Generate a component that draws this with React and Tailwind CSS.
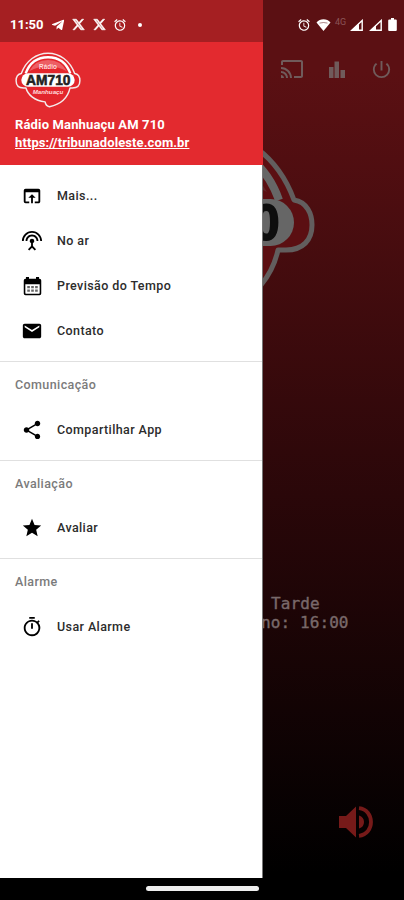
import { FaTelegramPlane } from 'react-icons/fa';
import { FaXTwitter } from 'react-icons/fa6';
import {
  MdAlarm,
  MdCast,
  MdEmail,
  MdOpenInBrowser,
  MdOutlineTimer,
  MdPowerSettingsNew,
  MdSettingsInputAntenna,
  MdShare,
  MdStar
} from 'react-icons/md';

function CalendarIcon({ className }) {
  return (
    <svg viewBox="0 0 24 24" fill="currentColor" className={className}>
      <path fillRule="evenodd" d="M4.500 1h3.500v2h8V1h3.500v2h.5a2 2 0 0 1 2 2v15a2 2 0 0 1-2 2H4a2 2 0 0 1-2-2V5a2 2 0 0 1 2-2h.5V1zM3.800 9.500V19.500q0 .7.7.7h15q.7 0 .7-.7V9.500z" />
      <path d="M6 11.500h3v2.500H6zM10.500 11.500h3v2.500h-3zM15 11.500h3v2.500h-3zM6 15.500h3v2.500H6zM10.500 15.500h3v2.500h-3zM15 15.500h3v2.500h-3z" opacity=".6" />
    </svg>
  );
}

function BarsIcon({ className }) {
  return (
    <svg viewBox="0 0 18 17" fill="currentColor" className={className}>
      <path d="M1 6h4.500v11H1zM6.500 0.500H11V17H6.500zM12.500 9H17v8h-4.500z" />
    </svg>
  );
}

function WifiIcon({ className }) {
  return (
    <svg viewBox="0 0 14 12" className={className}>
      <path d="M7 12 0 3.600C2 1.400 4.200.3 7 .3s5 1.100 7 3.300z" fill="#fff" />
      <path d="M3 4.100Q7 2.900 11 4.100" fill="none" stroke="#5a1013" strokeWidth=".5" />
    </svg>
  );
}

function SignalIcon({ className, level }) {
  return (
    <svg viewBox="0 0 13 12" className={className}>
      <path d="M1.800 11.300 12.200 1.500v9.800z" fill="none" stroke="#fff" strokeWidth="1.400" />
      <path d={level === 'high' ? 'M1.500 11.500 9 4v7.500z' : 'M1.500 11.500 7 6v5.500z'} fill="#fff" />
    </svg>
  );
}

function BatteryIcon({ className }) {
  return (
    <svg viewBox="0 0 9 13" fill="#fff" className={className}>
      <path d="M3 0h3v1.500h1.800q1 0 1 1V12q0 1-1 1H1.200q-1 0-1-1V2.500q0-1 1-1H3z" />
    </svg>
  );
}

function VolumeIcon({ className }) {
  return (
    <svg viewBox="0 0 34 34" className={className}>
      <path d="M0 11h7L17 1.500v31L7 23H0zM20 10.500q5 1.500 5 6.500t-5 6.500z" fill="#761a19" />
      <path d="M20 3.200C28 4 32 10.500 32 17s-4 13-12 13.800" fill="none" stroke="#761a19" strokeWidth="3.800" />
    </svg>
  );
}

function RadioLogo({ className }) {
  return (
    <svg viewBox="-116 -96 232 200" className={className}>
      {/* headphones and speech bubble in one outline */}
      <path
        d="M-92-22C-76-66-40-92 0-92S76-66 92-22C105-20 110-8 110 3 110 18 101 28 84 28H76C72 46 58 82 5 93Q-8 90-10 76C-48 72-70 50-76 28H-84C-101 28-110 18-110 3-110-8-105-20-92-22z"
        fill="#e3262c"
        stroke="#f4eaea"
        strokeWidth="5"
        strokeLinejoin="round"
      />
      <path d="M-77-22C-64-58-38-78 0-78S64-58 77-22" fill="none" stroke="#fff" strokeWidth="8" />
      <path d="M-65-30A74 74 0 0 1 65-30Q0-64-65-30z" fill="#f3868a" opacity=".6" />
      <rect x="-92" y="-23" width="184" height="47" rx="23.500" fill="#fff" />
      <g fontFamily="Liberation Sans, sans-serif" textAnchor="middle">
        <text x="1" y="18" fontSize="50" fontWeight="700" fill="#222" stroke="#222" strokeWidth="2" textLength="153" lengthAdjust="spacingAndGlyphs">AM710</text>
        <text x="0" y="-36" fontSize="22" fill="#ffdcdc" textLength="62">Rádio</text>
        <text x="0" y="48" fontSize="20" fontStyle="italic" fill="#ffdcdc" textLength="106" lengthAdjust="spacingAndGlyphs">Manhuaçu</text>
      </g>
    </svg>
  );
}

const mainItems = [
  { label: 'Mais...', Icon: MdOpenInBrowser },
  { label: 'No ar', Icon: MdSettingsInputAntenna },
  { label: 'Previsão do Tempo', Icon: CalendarIcon, size: 'h-[21px] w-[21px]' },
  { label: 'Contato', Icon: MdEmail }
];

const sections = [
  { title: 'Comunicação', label: 'Compartilhar App', Icon: MdShare },
  { title: 'Avaliação', label: 'Avaliar', Icon: MdStar },
  { title: 'Alarme', label: 'Usar Alarme', Icon: MdOutlineTimer }
];

function MenuItem({ label, Icon, size = 'h-[22px] w-[22px]' }) {
  return (
    <li className="flex h-[45px] items-center text-[12.500px] font-medium tracking-[0.4px] text-[#2c2c2c]">
      <span className="ml-5 flex w-6 justify-center text-black">
        <Icon className={size} aria-hidden="true" />
      </span>
      <span className="ml-[13px] pt-px">{label}</span>
    </li>
  );
}

function StatusBar() {
  return (
    <div className="absolute inset-x-0 top-0 flex h-[49px] items-center pl-[10px] pr-[7px] text-white">
      <span className="w-[33px] text-[13px] font-bold">11:50</span>
      <FaTelegramPlane className="ml-2 h-[14px] w-[14px]" />
      <FaXTwitter className="ml-[7px] h-[13px] w-[13px]" stroke="white" strokeWidth="24" />
      <FaXTwitter className="ml-2 h-[13px] w-[13px]" stroke="white" strokeWidth="24" />
      <MdAlarm className="ml-[7px] h-[14px] w-[14px]" />
      <span className="ml-[11px] h-1 w-1 rounded-full bg-white" />
      <div className="ml-auto flex items-center">
        <MdAlarm className="mr-[-1px] h-[14px] w-[14px]" />
        <WifiIcon className="ml-[6px] h-3 w-[15px]" />
        <span className="mb-1 ml-1 w-3 text-[9px] leading-none text-[#8b5558]">4G</span>
        <SignalIcon className="ml-[3px] h-3 w-[13px]" level="high" />
        <SignalIcon className="ml-[6px] h-3 w-[13px]" />
        <BatteryIcon className="ml-[6px] h-[13px] w-[9px]" />
      </div>
    </div>
  );
}

function Player() {
  return (
    <main className="flex h-full flex-col bg-linear-to-b/srgb from-[#5b1013] from-8% via-[#2a0709] via-55% to-black to-97%">
      <div className="mt-[50px] flex h-[38px] items-center justify-end pr-[11px] text-[#705b5b]">
        <MdCast className="h-6 w-6" />
        <BarsIcon className="ml-6 h-[17px] w-[18px]" />
        <MdPowerSettingsNew className="ml-6 h-[23px] w-[23px]" />
      </div>
      <RadioLogo className="mt-[38px] h-[200px] w-[232px] self-center brightness-[.4]" />
      <div className="mt-[269px] pl-[261px] font-['DejaVu_Sans_Mono',monospace] text-base leading-[18.500px] tracking-[0.1px] text-[#79696a] [-webkit-text-stroke:0.4px_#79696a]">
        <p className="pl-[10px]">Tarde</p>
        <p>no: 16:00</p>
      </div>
      <VolumeIcon className="mr-[31px] mt-[173px] h-[34px] w-[34px] self-end" />
    </main>
  );
}

function Drawer() {
  return (
    <aside className="absolute left-0 top-0 h-[878px] w-[263px] border-r border-[#777] bg-white">
      <header className="-mr-px border-t-[42px] border-[#a51f22] bg-[#e32a2f] text-white">
        <div className="h-[123px] pt-[10px] text-[13px] font-bold leading-[17.500px]">
          <RadioLogo className="ml-[14px] h-[58px] w-[68px]" />
          <p className="ml-[15px] mt-[6px] tracking-[0.15px]">Rádio Manhuaçu AM 710</p>
          <p className="ml-[15px] tracking-[0.1px] underline">https://tribunadoleste.com.br</p>
        </div>
      </header>
      <ul className="pb-[7.500px] pt-[8.500px]">
        {mainItems.map((item) => (
          <MenuItem key={item.label} {...item} />
        ))}
      </ul>
      {sections.map(({ title, ...item }) => (
        <section key={title} className="h-[98.500px] border-t border-[#e0e0e0]">
          <h2 className="flex h-[45px] items-center pl-[15px] pt-[2px] text-[12.500px] font-medium tracking-[0.4px] text-[#7b7b7b]">{title}</h2>
          <ul>
            <MenuItem {...item} />
          </ul>
        </section>
      ))}
    </aside>
  );
}

export default function App() {
  return (
    <div className="relative h-[900px] w-[404px] overflow-hidden bg-black font-['Roboto',sans-serif]">
      <Player />
      <Drawer />
      <StatusBar />
      <div className="absolute bottom-[9px] left-[146px] h-[5px] w-[113px] rounded-full bg-[#eee]" />
    </div>
  );
}
